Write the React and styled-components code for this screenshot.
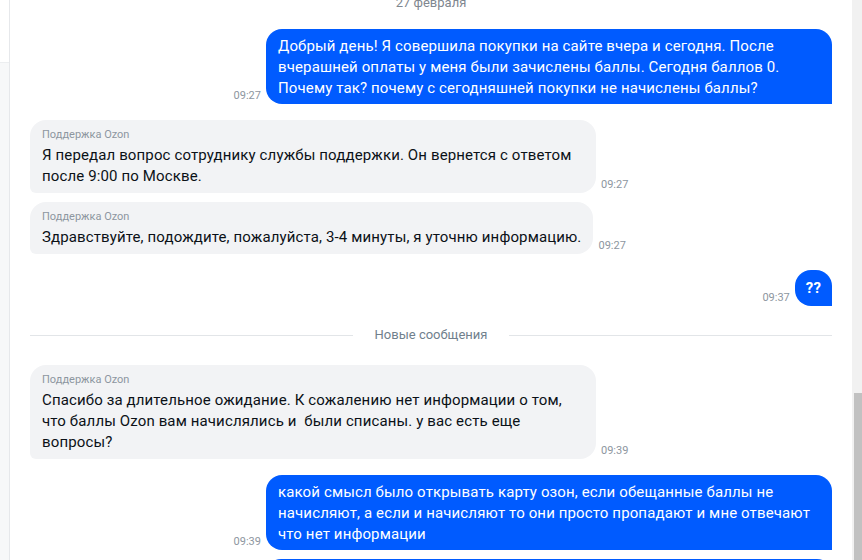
import React from "react";
import styled, { createGlobalStyle } from "styled-components";

const GlobalStyle = createGlobalStyle`
  html, body {
    margin: 0;
    padding: 0;
    height: 560px;
    overflow: hidden;
    background: #ffffff;
    font-family: Roboto, "Noto Sans", Arial, sans-serif;
  }
`;

const messages = [
  {
    type: "out",
    time: "09:27",
    text: "Добрый день! Я совершила покупки на сайте вчера и сегодня. После вчерашней оплаты у меня были зачислены баллы. Сегодня баллов 0. Почему так? почему с сегодняшней покупки не начислены баллы?",
  },
  {
    type: "in",
    time: "09:27",
    text: "Я передал вопрос сотруднику службы поддержки. Он вернется с ответом после 9:00 по Москве.",
  },
  {
    type: "in",
    time: "09:27",
    text: "Здравствуйте, подождите, пожалуйста, 3-4 минуты, я уточню информацию.",
  },
  { type: "out", time: "09:37", text: "??", short: true },
  { type: "divider", text: "Новые сообщения" },
  {
    type: "in",
    time: "09:39",
    text: "Спасибо за длительное ожидание. К сожалению нет информации о том, что баллы Ozon вам начислялись и  были списаны. у вас есть еще вопросы?",
  },
  {
    type: "out",
    time: "09:39",
    text: "какой смысл было открывать карту озон, если обещанные баллы не начисляют, а если и начисляют то они просто пропадают и мне отвечают что нет информации",
  },
  { type: "out", time: "", text: "" },
];

const Screen = styled.div`
  display: flex;
  height: 560px;
  overflow: hidden;
`;

const LeftRail = styled.div`
  width: 9px;
  flex: none;
  display: flex;
  flex-direction: column;
  border-right: 1px solid #e6e8eb;
`;

const RailTop = styled.div`
  height: 62px;
  background: #ffffff;
  border-bottom: 1px solid #eceef0;
`;

const RailRest = styled.div`
  flex: 1;
  background: #f7f8f9;
`;

const ChatArea = styled.div`
  flex: 1;
  overflow: hidden;
`;

const Feed = styled.div`
  display: flex;
  flex-direction: column;
  padding: 0 20px;
  margin-top: -7px;
`;

const DateLabel = styled.div`
  text-align: center;
  font-size: 13px;
  line-height: 20px;
  color: #7f8790;
`;

const Row = styled.div`
  display: flex;
  align-items: flex-end;
  gap: 5px;
  justify-content: ${(p) => (p.$out ? "flex-end" : "flex-start")};
  margin-top: ${(p) => (p.$grouped ? 9 : 16)}px;
`;

const Bubble = styled.div`
  max-width: 566px;
  box-sizing: border-box;
  padding: ${(p) => (p.$short ? "8px 11px 7px" : p.$out ? "7px 12px 5px" : "8px 12px 6px")};
  border-radius: ${(p) => (p.$out ? "16px 16px 0 16px" : "16px 16px 16px 6px")};
  background: ${(p) => (p.$out ? "#005bff" : "#f2f3f5")};
  color: ${(p) => (p.$out ? "#ffffff" : "#0b1117")};
  font-size: 15px;
  line-height: 21px;
  letter-spacing: 0.13px;
  white-space: pre-wrap;
  font-weight: ${(p) => (p.$short ? 700 : 400)};
  min-height: ${(p) => (p.$empty ? "30px" : "auto")};
  width: ${(p) => (p.$empty ? "566px" : "auto")};
`;

const Sender = styled.div`
  font-size: 11px;
  line-height: 14px;
  letter-spacing: 0;
  color: #8d96a0;
  margin-bottom: 3px;
`;

const Time = styled.span`
  font-size: 11px;
  line-height: 14px;
  color: #8d96a0;
  flex: none;
  margin-bottom: 1px;
`;

const Divider = styled.div`
  display: flex;
  align-items: center;
  gap: 22px;
  margin: 20px 0 5px;
  font-size: 13px;
  line-height: 18px;
  color: #707f8d;

  &::before,
  &::after {
    content: "";
    flex: 1;
    height: 1px;
    background: #e2e5e8;
  }
`;

const Scrollbar = styled.div`
  width: 10px;
  flex: none;
  display: flex;
  flex-direction: column;
  background: #f1f1f1;
`;

const ScrollSpace = styled.div`
  height: 393px;
`;

const Thumb = styled.div`
  flex: 1;
  margin-left: 2px;
  background: #c1c1c1;
`;

const Message = ({ m, prev }) => {
  const out = m.type === "out";
  const grouped = prev && prev.type === m.type;
  return (
    <Row $out={out} $grouped={grouped}>
      {out && m.time && <Time>{m.time}</Time>}
      <Bubble $out={out} $short={m.short} $empty={!m.text}>
        {!out && <Sender>Поддержка Ozon</Sender>}
        {m.text}
      </Bubble>
      {!out && <Time>{m.time}</Time>}
    </Row>
  );
};

export default function App() {
  return (
    <>
      <GlobalStyle />
      <Screen>
        <LeftRail>
          <RailTop />
          <RailRest />
        </LeftRail>
        <ChatArea>
          <Feed>
            <DateLabel>27 февраля</DateLabel>
            {messages.map((m, i) =>
              m.type === "divider" ? (
                <Divider key={i}>{m.text}</Divider>
              ) : (
                <Message
                  key={i}
                  m={m}
                  prev={messages[i - 1] && messages[i - 1].type !== "divider" ? messages[i - 1] : null}
                />
              )
            )}
          </Feed>
        </ChatArea>
        <Scrollbar>
          <ScrollSpace />
          <Thumb />
        </Scrollbar>
      </Screen>
    </>
  );
}
